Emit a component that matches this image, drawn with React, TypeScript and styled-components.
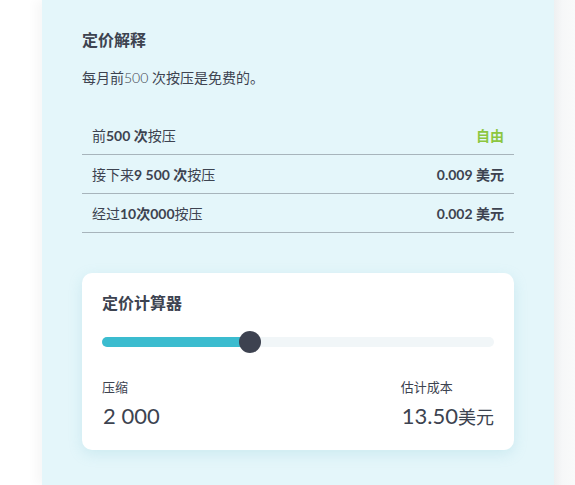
import React from 'react'
import styled, { createGlobalStyle } from 'styled-components'

const GlobalStyle = createGlobalStyle`
	html, body {
		margin: 0;
		padding: 0;
		background: #ffffff;
	}
	body {
		font-family: Lato, 'Noto Sans CJK SC', sans-serif;
		color: #3d4350;
	}
`

interface Tier {
	label: React.ReactNode
	price: string
	free?: boolean
}

const tiers: Tier[] = [
	{ label: <>前<b>500 次</b>按压</>, price: '自由', free: true },
	{ label: <>接下来<b>9 500 次</b>按压</>, price: '0.009 美元' },
	{ label: <>经过<b>10次000</b>按压</>, price: '0.002 美元' },
]

export default function App() {
	const progress = 0.378

	return (
		<Page>
			<GlobalStyle />
			<Panel>
				<Heading>定价解释</Heading>
				<Intro>每月前<Light>500</Light> 次按压是免费的。</Intro>
				<Table>
					{tiers.map((tier, i) => (
						<Row key={i}>
							<span>{tier.label}</span>
							<Price $free={tier.free}>{tier.price}</Price>
						</Row>
					))}
				</Table>
				<Card>
					<CardTitle>定价计算器</CardTitle>
					<Track>
						<Fill style={{ width: `${progress * 100}%` }} />
						<Thumb style={{ left: `${progress * 100}%` }} />
					</Track>
					<Stats>
						<Stat>
							<StatLabel>压缩</StatLabel>
							<StatValue>2 000</StatValue>
						</Stat>
						<Stat>
							<StatLabel>估计成本</StatLabel>
							<StatValue>
								13.50<Unit>美元</Unit>
							</StatValue>
						</Stat>
					</Stats>
				</Card>
			</Panel>
			<Side />
		</Page>
	)
}

const Page = styled.div`
	width: 575px;
	height: 485px;
	display: flex;
	overflow: hidden;
	padding-left: 42px;
	box-sizing: border-box;
`

const Panel = styled.div`
	width: 512px;
	flex-shrink: 0;
	background: #e4f6fa;
	padding: 30px 40px 0;
	box-sizing: border-box;
	box-shadow: -6px 0 10px rgba(0, 0, 0, 0.035);
	position: relative;
	z-index: 1;
`

const Side = styled.div`
	flex: 1;
	background: linear-gradient(to right, #eef0f1, #f6f7f8 40%, #f9fafa);
`

const Heading = styled.h2`
	margin: 0;
	font-size: 16px;
	font-weight: 700;
	line-height: 20px;
`

const Intro = styled.p`
	margin: 18px 0 0;
	font-size: 14px;
	line-height: 20px;
`

const Light = styled.span`
	font-weight: 300;
`

const Table = styled.div`
	margin-top: 28px;
`

const Row = styled.div`
	display: flex;
	justify-content: space-between;
	align-items: center;
	height: 38px;
	padding: 0 10px;
	font-size: 14px;
	border-bottom: 1px solid #a7b4bb;

	b {
		font-weight: 700;
	}
`

const Price = styled.span<{ $free?: boolean }>`
	font-weight: 700;
	color: ${p => (p.$free ? '#8cc63f' : '#3d4350')};
`

const Card = styled.div`
	margin-top: 40px;
	background: #ffffff;
	border-radius: 10px;
	padding: 20px;
	box-shadow: 0 4px 14px rgba(120, 190, 210, 0.22);
`

const CardTitle = styled.h3`
	margin: 0;
	font-size: 16px;
	font-weight: 700;
	line-height: 20px;
`

const Track = styled.div`
	position: relative;
	margin-top: 24px;
	height: 10px;
	border-radius: 5px;
	background: #f1f6f8;
`

const Fill = styled.div`
	height: 100%;
	border-radius: 5px;
	background: #3bbccf;
`

const Thumb = styled.div`
	position: absolute;
	top: 50%;
	width: 22px;
	height: 22px;
	border-radius: 50%;
	background: #3d4250;
	transform: translate(-50%, -50%);
`

const Stats = styled.div`
	display: flex;
	justify-content: space-between;
	margin-top: 31px;
`

const Stat = styled.div`
	display: flex;
	flex-direction: column;
	align-items: flex-start;
`

const StatLabel = styled.span`
	font-size: 13px;
	line-height: 18px;
`

const StatValue = styled.span`
	margin-top: 7px;
	font-size: 22px;
	line-height: 26px;
	padding-left: 1px;
`

const Unit = styled.span`
	font-size: 18px;
`
